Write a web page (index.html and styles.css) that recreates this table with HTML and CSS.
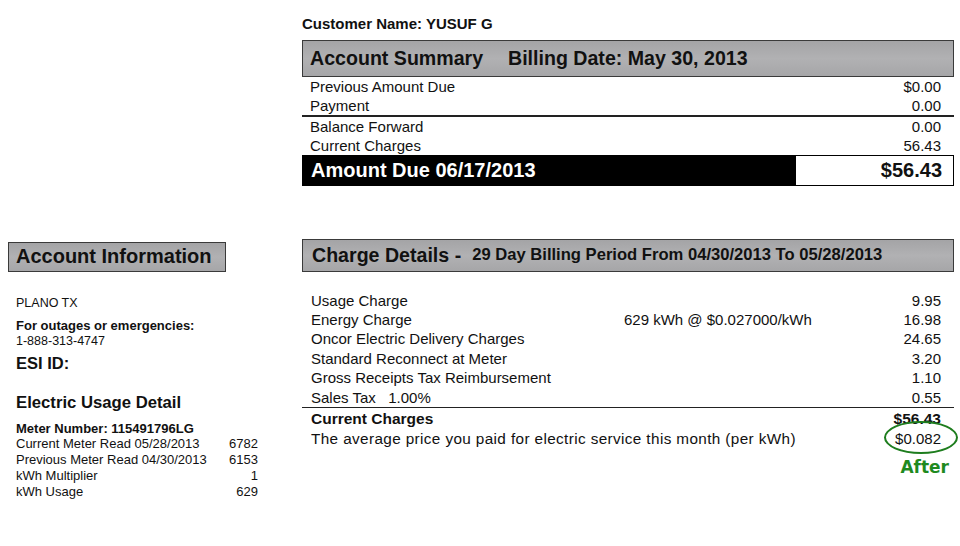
FILE: index.html
```html
<!DOCTYPE html>
<html>
<head>
<meta charset="utf-8">
<link rel="stylesheet" href="styles.css">
</head>
<body>
<div class="page">
  <div class="left">
    <div class="box-head left-head">Account Information</div>
    <div class="city">PLANO TX</div>
    <div class="outage">For outages or emergencies:</div>
    <div class="phone">1-888-313-4747</div>
    <div class="esi">ESI ID:</div>
    <div class="usage-title">Electric Usage Detail</div>
    <div class="meter">Meter Number: 115491796LG</div>
    <div class="mrow"><span>Current Meter Read 05/28/2013</span><span>6782</span></div>
    <div class="mrow"><span>Previous Meter Read 04/30/2013</span><span>6153</span></div>
    <div class="mrow"><span>kWh Multiplier</span><span>1</span></div>
    <div class="mrow"><span>kWh Usage</span><span>629</span></div>
  </div>
  <div class="right">
    <div class="customer">Customer Name: YUSUF G</div>
    <div class="box-head summary-head"><span class="sum-title">Account Summary</span><span>Billing Date: May 30, 2013</span></div>
    <div class="rows">
      <div class="row"><span>Previous Amount Due</span><span>$0.00</span></div>
      <div class="row"><span>Payment</span><span>0.00</span></div>
    </div>
    <div class="rule"></div>
    <div class="rows">
      <div class="row"><span>Balance Forward</span><span>0.00</span></div>
      <div class="row"><span>Current Charges</span><span>56.43</span></div>
    </div>
    <div class="due">
      <div class="due-label">Amount Due 06/17/2013</div>
      <div class="due-value">$56.43</div>
    </div>

    <div class="box-head charge-head"><span class="ch-title">Charge Details -</span><span class="ch-sub">29 Day Billing Period From 04/30/2013 To 05/28/2013</span></div>
    <div class="charges">
      <div class="crow"><span class="cl">Usage Charge</span><span class="cm"></span><span class="cv">9.95</span></div>
      <div class="crow"><span class="cl">Energy Charge</span><span class="cm">629 kWh @ $0.027000/kWh</span><span class="cv">16.98</span></div>
      <div class="crow"><span class="cl">Oncor Electric Delivery Charges</span><span class="cm"></span><span class="cv">24.65</span></div>
      <div class="crow"><span class="cl">Standard Reconnect at Meter</span><span class="cm"></span><span class="cv">3.20</span></div>
      <div class="crow"><span class="cl">Gross Receipts Tax Reimbursement</span><span class="cm"></span><span class="cv">1.10</span></div>
      <div class="crow"><span class="cl">Sales Tax&nbsp;&nbsp;&nbsp;1.00%</span><span class="cm"></span><span class="cv">0.55</span></div>
    </div>
    <div class="rule rule2"></div>
    <div class="crow total"><span class="cl">Current Charges</span><span class="cv">$56.43</span></div>
    <div class="crow avg"><span class="cl avg-text">The average price you paid for electric service this month (per kWh)</span><span class="cv circled">$0.082<span class="ring"></span></span></div>
    <div class="after-row"><span class="after">After</span></div>
  </div>
</div>
</body>
</html>
```

FILE: styles.css
```css
html, body {
  margin: 0;
  padding: 0;
  background: #ffffff;
}
body {
  font-family: "Liberation Sans", Arial, sans-serif;
  color: #111;
  width: 960px;
  height: 546px;
  overflow: hidden;
}
.page {
  display: flex;
  align-items: flex-start;
}
.left {
  width: 250px;
  margin-left: 8px;
  margin-right: 44px;
  padding-top: 242px;
}
.right {
  width: 652px;
  padding-top: 16px;
}
.box-head {
  box-sizing: border-box;
  background: linear-gradient(180deg, #a4a4a6 0%, #b1b1b3 50%, #a6a6a8 100%);
  border: 1.5px solid #3a3a3a;
  font-weight: bold;
  color: #111;
}
.left-head {
  width: 218px;
  height: 30px;
  font-size: 20px;
  line-height: 27px;
  padding-left: 7px;
  white-space: nowrap;
}
.city {
  font-size: 12.5px;
  margin-top: 24px;
  padding-left: 8px;
  line-height: 15px;
}
.outage {
  font-size: 13px;
  font-weight: bold;
  margin-top: 7px;
  padding-left: 8px;
  line-height: 15px;
}
.phone {
  font-size: 12.5px;
  padding-left: 8px;
  line-height: 15px;
  margin-top: 1px;
}
.esi {
  font-size: 16.5px;
  font-weight: bold;
  padding-left: 8px;
  line-height: 18px;
  margin-top: 5px;
}
.usage-title {
  font-size: 16.7px;
  font-weight: bold;
  padding-left: 8px;
  line-height: 18px;
  margin-top: 22px;
}
.meter {
  font-size: 13px;
  font-weight: bold;
  padding-left: 8px;
  line-height: 15px;
  margin-top: 9px;
}
.mrow {
  display: flex;
  justify-content: space-between;
  font-size: 13px;
  line-height: 16px;
  padding-left: 8px;
  width: 242px;
}
.customer {
  font-size: 15px;
  font-weight: bold;
  line-height: 16px;
  padding-left: 0;
  margin-bottom: 8px;
}
.summary-head {
  height: 37px;
  font-size: 19.6px;
  line-height: 34px;
  padding-left: 7px;
  display: flex;
}
.sum-title {
  width: 198px;
}
.rows {
  padding: 0 13px 0 8px;
}
.row {
  display: flex;
  justify-content: space-between;
  font-size: 15px;
  line-height: 19px;
}
.rule {
  height: 1.5px;
  background: #222;
}
.due {
  display: flex;
  height: 31px;
  box-sizing: border-box;
}
.due-label {
  flex: 0 0 493px;
  background: #000;
  color: #fff;
  font-weight: bold;
  font-size: 20px;
  line-height: 31px;
  padding-left: 9px;
  box-sizing: border-box;
}
.due-value {
  flex: 1;
  border: 1.5px solid #000;
  font-weight: bold;
  font-size: 20px;
  line-height: 28px;
  text-align: right;
  padding-right: 11px;
}
.charge-head {
  margin-top: 53px;
  height: 33px;
  padding-left: 9px;
  display: flex;
  align-items: center;
  font-size: 19.6px;
}
.ch-title {
  margin-right: 11px;
}
.ch-sub {
  font-size: 16.6px;
}
.charges {
  margin-top: 19px;
}
.crow {
  display: flex;
  font-size: 15px;
  line-height: 19.4px;
  padding: 0 13px 0 9px;
}
.cl {
  width: 313px;
  white-space: nowrap;
}
.cm {
  flex: 1;
}
.cv {
  text-align: right;
}
.total {
  font-weight: bold;
  font-size: 15.5px;
  line-height: 22px;
  justify-content: space-between;
}
.avg {
  justify-content: space-between;
  line-height: 17px;
}
.avg-text {
  font-size: 15.3px;
  letter-spacing: 0.38px;
}
.circled {
  position: relative;
}
.ring {
  position: absolute;
  left: -11px;
  top: -9px;
  width: 70px;
  height: 29px;
  border: 2.5px solid #1e7d1e;
  border-radius: 50%;
}
.after-row {
  display: flex;
  justify-content: flex-end;
  padding-right: 5px;
  margin-top: 10px;
}
.after {
  font-family: "DejaVu Sans", Verdana, sans-serif;
  font-weight: bold;
  font-size: 17px;
  color: #1f8a1f;
  line-height: 20px;
}
```
